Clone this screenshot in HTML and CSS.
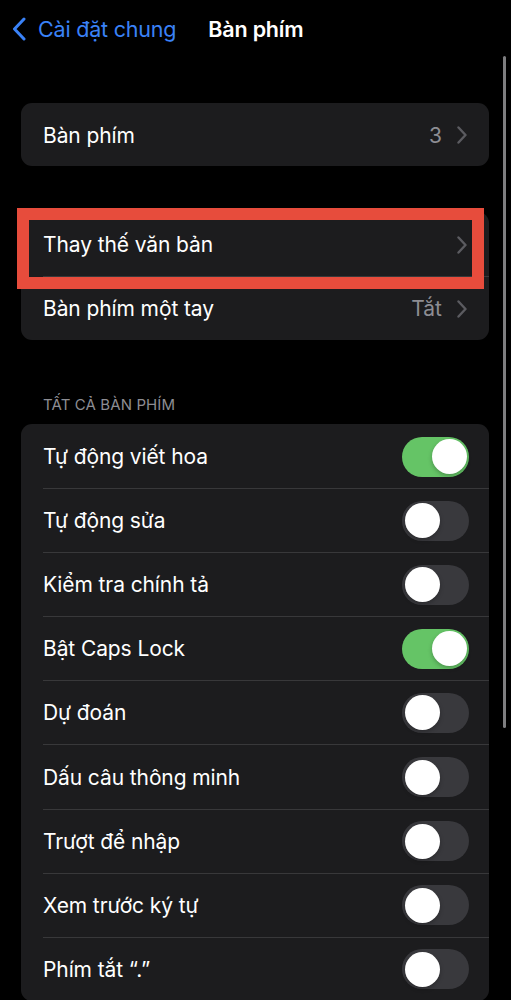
FILE: index.html
```html
<!DOCTYPE html>
<html lang="vi">
<head>
<meta charset="utf-8">
<title>Bàn phím</title>
<link rel="stylesheet" href="styles.css">
</head>
<body>
<div class="screen">
  <header class="nav">
    <div class="back">
      <svg class="back-icon" width="14" height="24" viewBox="0 0 14 24"><polyline points="12,2 2.5,12 12,22" fill="none" stroke="#3a82f7" stroke-width="3" stroke-linecap="round" stroke-linejoin="round"/></svg>
      <span class="back-label">Cài đặt chung</span>
    </div>
    <div class="title">Bàn phím</div>
  </header>

  <main class="content">
    <section class="group g1">
      <div class="row">
        <span class="label">Bàn phím</span>
        <span class="value">3</span>
        <svg class="chev" width="10" height="18" viewBox="0 0 10 18"><polyline points="1.5,1.5 8.5,9 1.5,16.5" fill="none" stroke="#5b5b60" stroke-width="2.4" stroke-linecap="round" stroke-linejoin="round"/></svg>
      </div>
    </section>

    <section class="group g2">
      <div class="row">
        <span class="label">Thay thế văn bản</span>
        <svg class="chev" width="10" height="18" viewBox="0 0 10 18"><polyline points="1.5,1.5 8.5,9 1.5,16.5" fill="none" stroke="#5b5b60" stroke-width="2.4" stroke-linecap="round" stroke-linejoin="round"/></svg>
      </div>
      <div class="row">
        <span class="label">Bàn phím một tay</span>
        <span class="value">Tắt</span>
        <svg class="chev" width="10" height="18" viewBox="0 0 10 18"><polyline points="1.5,1.5 8.5,9 1.5,16.5" fill="none" stroke="#5b5b60" stroke-width="2.4" stroke-linecap="round" stroke-linejoin="round"/></svg>
      </div>
    </section>

    <div class="section-header">TẤT CẢ BÀN PHÍM</div>
    <section class="group g3">
      <div class="row"><span class="label">Tự động viết hoa</span><span class="toggle on"><span class="knob"></span></span></div>
      <div class="row"><span class="label">Tự động sửa</span><span class="toggle"><span class="knob"></span></span></div>
      <div class="row"><span class="label">Kiểm tra chính tả</span><span class="toggle"><span class="knob"></span></span></div>
      <div class="row"><span class="label">Bật Caps Lock</span><span class="toggle on"><span class="knob"></span></span></div>
      <div class="row"><span class="label">Dự đoán</span><span class="toggle"><span class="knob"></span></span></div>
      <div class="row"><span class="label">Dấu câu thông minh</span><span class="toggle"><span class="knob"></span></span></div>
      <div class="row"><span class="label">Trượt để nhập</span><span class="toggle"><span class="knob"></span></span></div>
      <div class="row"><span class="label">Xem trước ký tự</span><span class="toggle"><span class="knob"></span></span></div>
      <div class="row"><span class="label">Phím tắt “.”</span><span class="toggle"><span class="knob"></span></span></div>
    </section>
  </main>

  <div class="highlight"></div>
  <div class="scrollbar"></div>
</div>
</body>
</html>
```

FILE: styles.css
```css
* { box-sizing: border-box; }
html, body {
  margin: 0;
  padding: 0;
  background: #000;
}
body {
  font-family: Inter, "Noto Sans", "DejaVu Sans", sans-serif;
  color: #fff;
  -webkit-font-smoothing: antialiased;
}
.screen {
  position: relative;
  width: 511px;
  height: 1000px;
  overflow: hidden;
  background: #000;
}
.nav {
  display: flex;
  align-items: center;
  height: 58px;
  padding-left: 12px;
}
.back {
  display: flex;
  align-items: center;
  gap: 12px;
}
.back-icon { display: block; }
.back-label {
  color: #3a82f7;
  font-size: 21.5px;
  letter-spacing: -0.2px;
}
.title {
  margin-left: 32px;
  font-size: 21.5px;
  font-weight: 600;
  letter-spacing: -0.2px;
}
.content {
  padding: 0 22px 0 21px;
}
.group {
  background: #1c1c1e;
  border-radius: 11px;
  overflow: hidden;
}
.g1 { margin-top: 45px; }
.g2 { margin-top: 46px; }
.row {
  display: flex;
  align-items: center;
  height: 64px;
  padding: 0 21px 0 22px;
  position: relative;
}
.g1 .row { height: 63px; padding-top: 1px; }
.g2 .row { padding-top: 1px; }
.row + .row::before {
  content: "";
  position: absolute;
  top: 0;
  left: 22px;
  right: 0;
  height: 1px;
  background: #38383a;
}
.label {
  flex: 1;
  font-size: 21px;
  letter-spacing: -0.1px;
  color: #fff;
}
.value {
  font-size: 21px;
  color: #8d8d93;
  margin-right: 15px;
}
.chev { display: block; margin-right: 1px; }
.section-header {
  margin: 55px 0 0 22px;
  height: 29px;
  font-size: 15px;
  color: #8d8d93;
  letter-spacing: 0.1px;
}
.g3 .row { padding-right: 20px; height: 64.1px; padding-top: 1px; }
.toggle {
  position: relative;
  width: 67px;
  height: 40px;
  border-radius: 20px;
  background: #39393d;
  flex: none;
}
.toggle.on { background: #65c466; }
.knob {
  position: absolute;
  top: 2.5px;
  left: 2.5px;
  width: 35px;
  height: 35px;
  border-radius: 50%;
  background: #fff;
  box-shadow: 0 2px 4px rgba(0,0,0,0.25);
}
.toggle.on .knob { left: 29.5px; }
.highlight {
  position: absolute;
  left: 17px;
  top: 208px;
  width: 467px;
  height: 81px;
  border: 12px solid #e74c3c;
}
.scrollbar {
  position: absolute;
  left: 503px;
  top: 56px;
  width: 3px;
  height: 672px;
  border-radius: 2px;
  background: #7e7e80;
}
```
